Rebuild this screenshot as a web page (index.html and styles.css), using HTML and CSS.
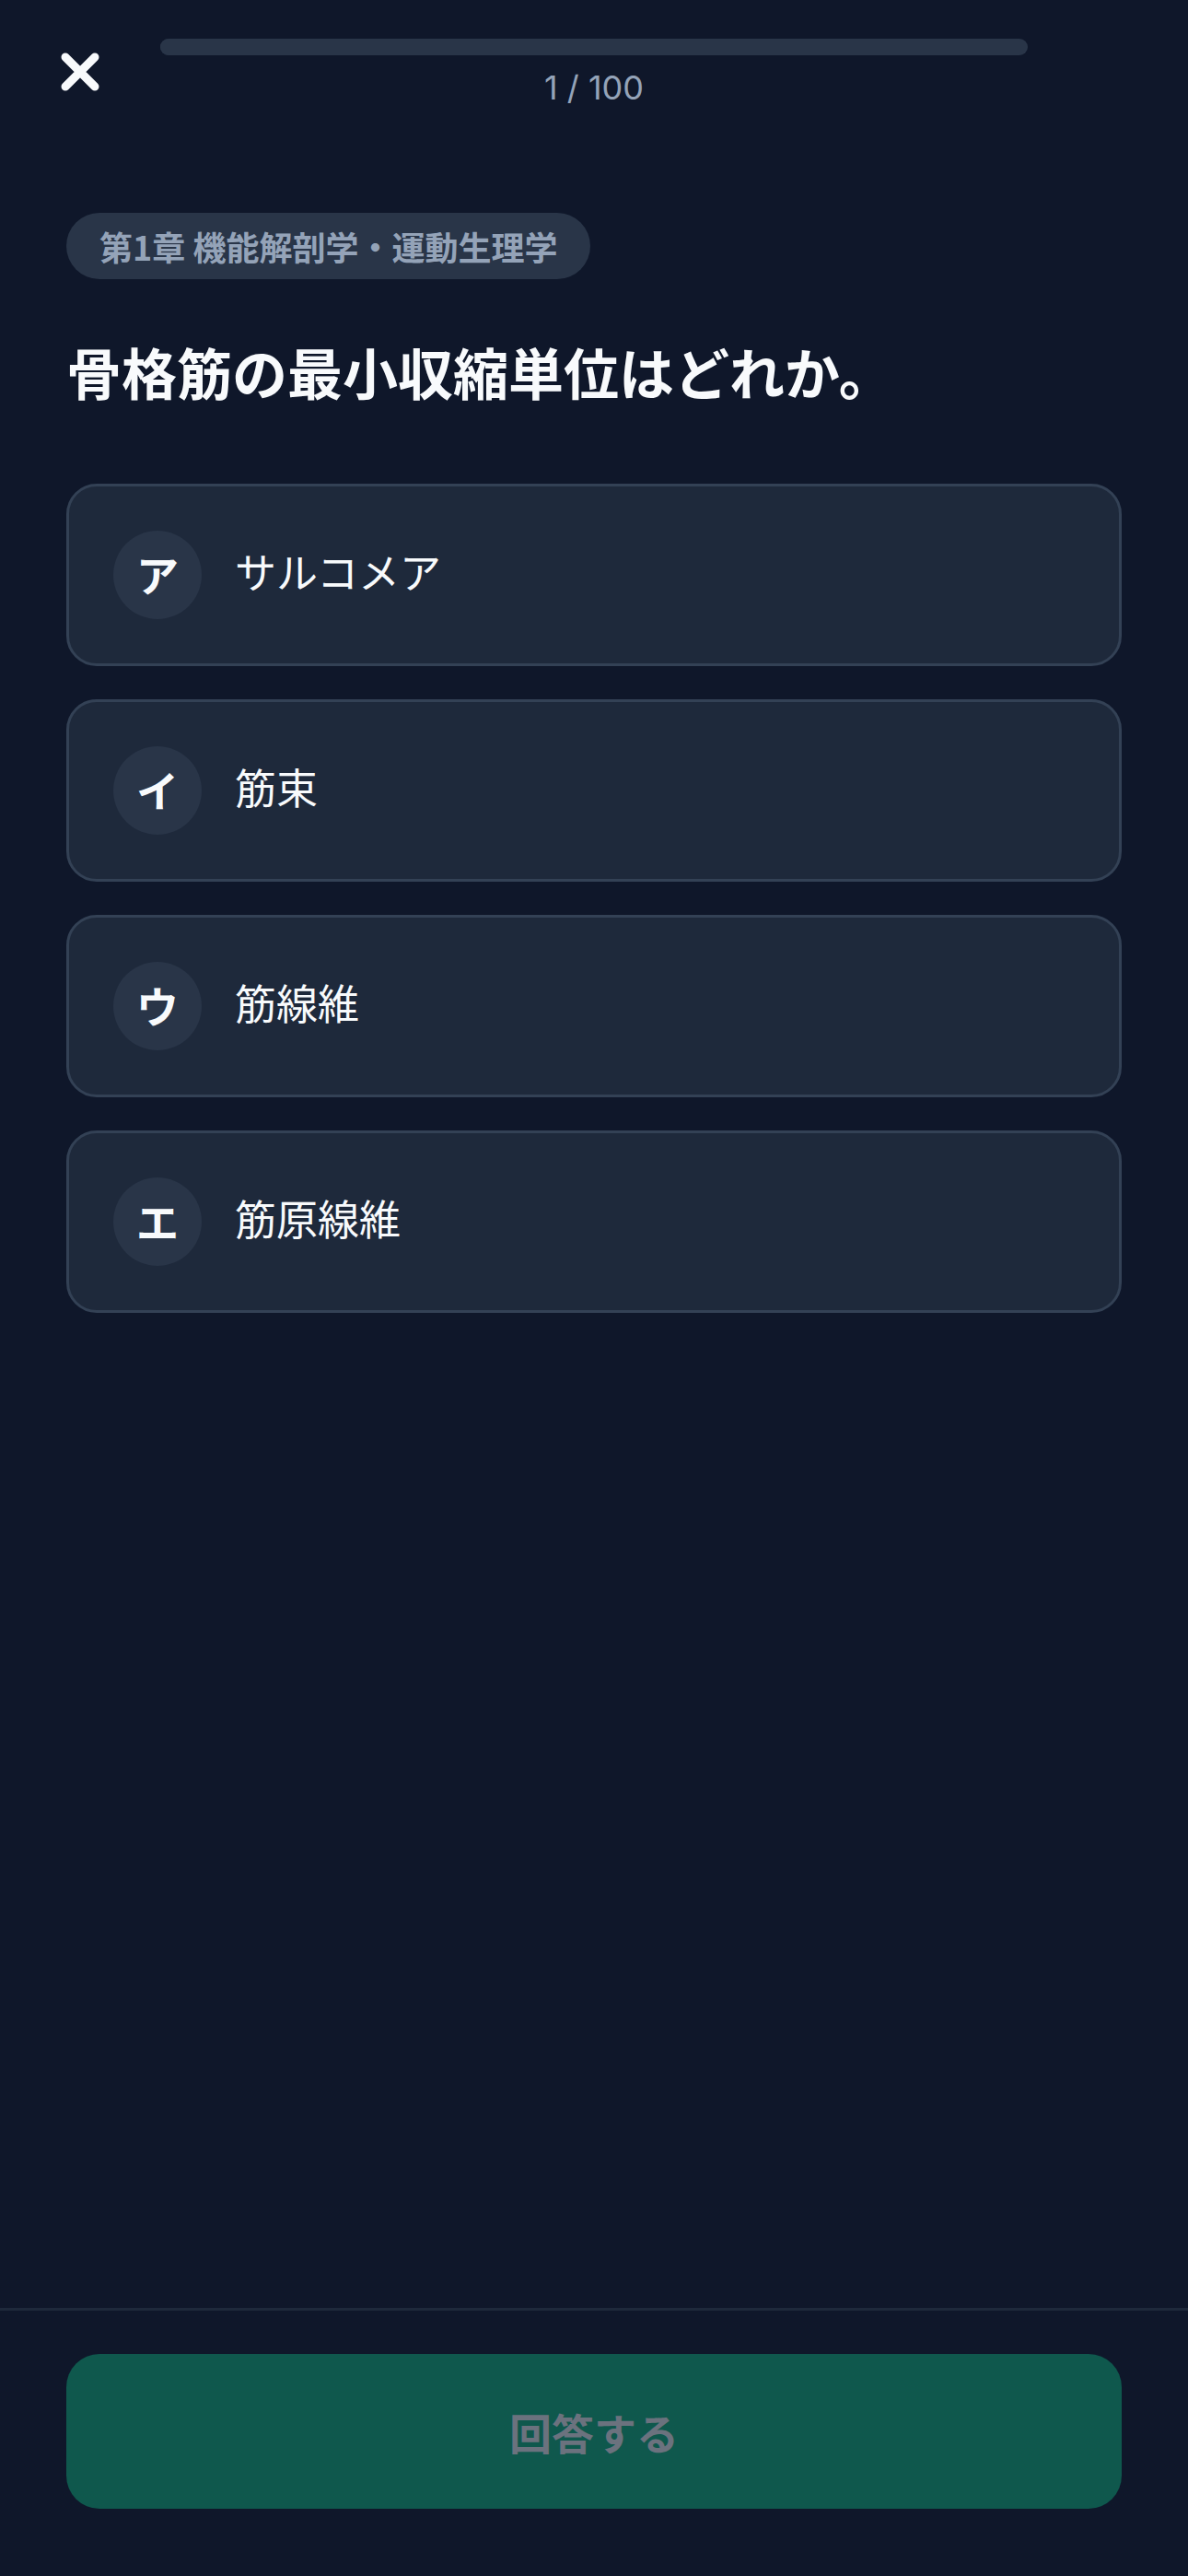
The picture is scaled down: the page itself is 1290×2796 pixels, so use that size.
FILE: index.html
```html
<!DOCTYPE html>
<html lang="ja">
<head>
<meta charset="utf-8">
<title>Quiz</title>
<link rel="stylesheet" href="styles.css">
</head>
<body>
<div class="screen">
  <header class="topbar">
    <button class="close" aria-label="閉じる">
      <svg width="48" height="48" viewBox="0 0 48 48"><path d="M8 8 L40 40 M40 8 L8 40" stroke="#f8fafc" stroke-width="9" stroke-linecap="round" fill="none"/></svg>
    </button>
    <div class="progress">
      <div class="track"><div class="fill" style="width:1%"></div></div>
      <div class="count">1 / 100</div>
    </div>
    <div class="spacer"></div>
  </header>

  <main class="content">
    <span class="chapter">第1章 機能解剖学・運動生理学</span>
    <h1 class="question">骨格筋の最小収縮単位はどれか。</h1>
    <ul class="options">
      <li class="option"><span class="badge">ア</span><span class="label">サルコメア</span></li>
      <li class="option"><span class="badge">イ</span><span class="label">筋束</span></li>
      <li class="option"><span class="badge">ウ</span><span class="label">筋線維</span></li>
      <li class="option"><span class="badge">エ</span><span class="label">筋原線維</span></li>
    </ul>
  </main>

  <footer class="footer">
    <button class="submit" disabled>回答する</button>
  </footer>
</div>
</body>
</html>
```
FILE: styles.css
```css
* { box-sizing: border-box; }
html, body { margin: 0; padding: 0; }
body {
  background: #0f172a;
  font-family: "Noto Sans CJK JP", "Noto Sans", sans-serif;
  color: #f8fafc;
}
.screen {
  height: 2796px;
  display: flex;
  flex-direction: column;
}
.topbar {
  display: grid;
  grid-template-columns: 174px 1fr 174px;
  align-items: start;
  padding-top: 42px;
}
.close {
  margin: 12px 0 0 63px;
  padding: 0;
  width: 48px;
  height: 48px;
  border: 0;
  background: transparent;
  display: block;
}
.close svg { display: block; }
.progress {
  display: flex;
  flex-direction: column;
  align-items: center;
}
.track {
  width: 100%;
  height: 18px;
  border-radius: 9px;
  background: #293548;
  overflow: hidden;
}
.fill {
  height: 100%;
  background: #293548;
}
.count {
  margin-top: 14px;
  font-family: Inter, "Noto Sans", sans-serif;
  font-size: 36px;
  line-height: 43px;
  color: #94a3b8;
}
.content {
  flex: 1;
  padding: 114px 72px 0;
  display: flex;
  flex-direction: column;
  align-items: flex-start;
}
.chapter {
  display: inline-flex;
  align-items: center;
  height: 72px;
  padding: 0 36px;
  border-radius: 36px;
  background: #293548;
  color: #94a3b8;
  font-size: 36px;
  font-weight: 700;
}
.question {
  margin: 58px 0 0;
  font-size: 60px;
  line-height: 84px;
  font-weight: 700;
  color: #f8fafc;
}
.options {
  list-style: none;
  margin: 80px 0 0;
  padding: 0;
  width: 100%;
  display: flex;
  flex-direction: column;
  gap: 36px;
}
.option {
  display: flex;
  align-items: center;
  gap: 36px;
  padding: 48px;
  border: 3px solid #334155;
  border-radius: 33px;
  background: #1e293b;
}
.badge {
  width: 96px;
  height: 96px;
  border-radius: 50%;
  background: #293548;
  display: flex;
  align-items: center;
  justify-content: center;
  font-size: 46px;
  font-weight: 700;
  color: #f8fafc;
  flex: none;
  padding-bottom: 4px;
}
.label {
  font-size: 45px;
  line-height: 60px;
  padding-bottom: 8px;
  color: #f8fafc;
}
.footer {
  border-top: 3px solid #1e293b;
  padding: 47px 72px 73px;
}
.submit {
  width: 100%;
  height: 168px;
  border: 0;
  border-radius: 36px;
  background: #0f584d;
  color: #6b727e;
  font-family: "Noto Sans CJK JP", "Noto Sans", sans-serif;
  font-size: 46px;
  font-weight: 700;
}
```
